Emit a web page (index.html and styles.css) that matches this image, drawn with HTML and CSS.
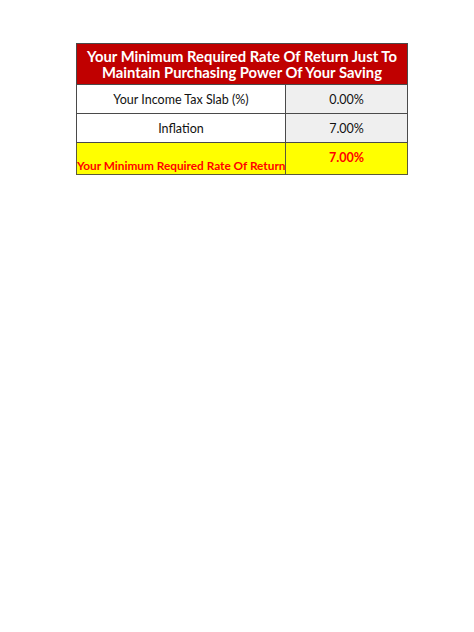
FILE: index.html
```html
<!DOCTYPE html>
<html>
<head>
<meta charset="utf-8">
<link rel="stylesheet" href="styles.css">
</head>
<body>
<div class="page">
  <table class="calc">
    <colgroup>
      <col class="col-label">
      <col class="col-value">
    </colgroup>
    <tr>
      <th colspan="2" class="title">Your Minimum Required Rate Of Return Just To<br>Maintain Purchasing Power Of Your Saving</th>
    </tr>
    <tr class="row">
      <td class="label">Your Income Tax Slab (%)</td>
      <td class="value">0.00%</td>
    </tr>
    <tr class="row">
      <td class="label">Inflation</td>
      <td class="value">7.00%</td>
    </tr>
    <tr class="result">
      <td class="label">Your Minimum Required Rate Of Return</td>
      <td class="value">7.00%</td>
    </tr>
  </table>
</div>
</body>
</html>
```

FILE: styles.css
```css
html, body {
  margin: 0;
  padding: 0;
  background: #ffffff;
}
.page {
  padding: 43px 0 0 76px;
  font-family: Lato, "Liberation Sans", sans-serif;
}
.calc {
  border-collapse: collapse;
  width: 331px;
  table-layout: fixed;
}
.col-label {
  width: 209px;
}
.col-value {
  width: 122px;
}
.calc td, .calc th {
  padding: 0;
  border: 1px solid #4a4a4a;
  box-sizing: border-box;
}
.title {
  background: #c00000;
  color: #ffffff;
  font-weight: bold;
  font-size: 14.8px;
  line-height: 16px;
  height: 41px;
  text-align: center;
  border-color: #c00000 #c00000 #4a4a4a #c00000;
}
.row td {
  height: 29px;
  font-size: 12.5px;
  color: #111;
  text-align: center;
}
.row .label {
  background: #ffffff;
}
.row .value {
  background: #efefef;
}
.result td {
  height: 32px;
  background: #ffff00;
  color: #ff0000;
  font-weight: bold;
  border-color: #5a5a3a;
}
.result .label {
  font-size: 11.8px;
  line-height: 14px;
  vertical-align: bottom;
  text-align: left;
  white-space: nowrap;
  padding-bottom: 1px;
}
.result .value {
  font-size: 12.5px;
  line-height: 14px;
  vertical-align: top;
  text-align: center;
  padding-top: 8px;
}
```
